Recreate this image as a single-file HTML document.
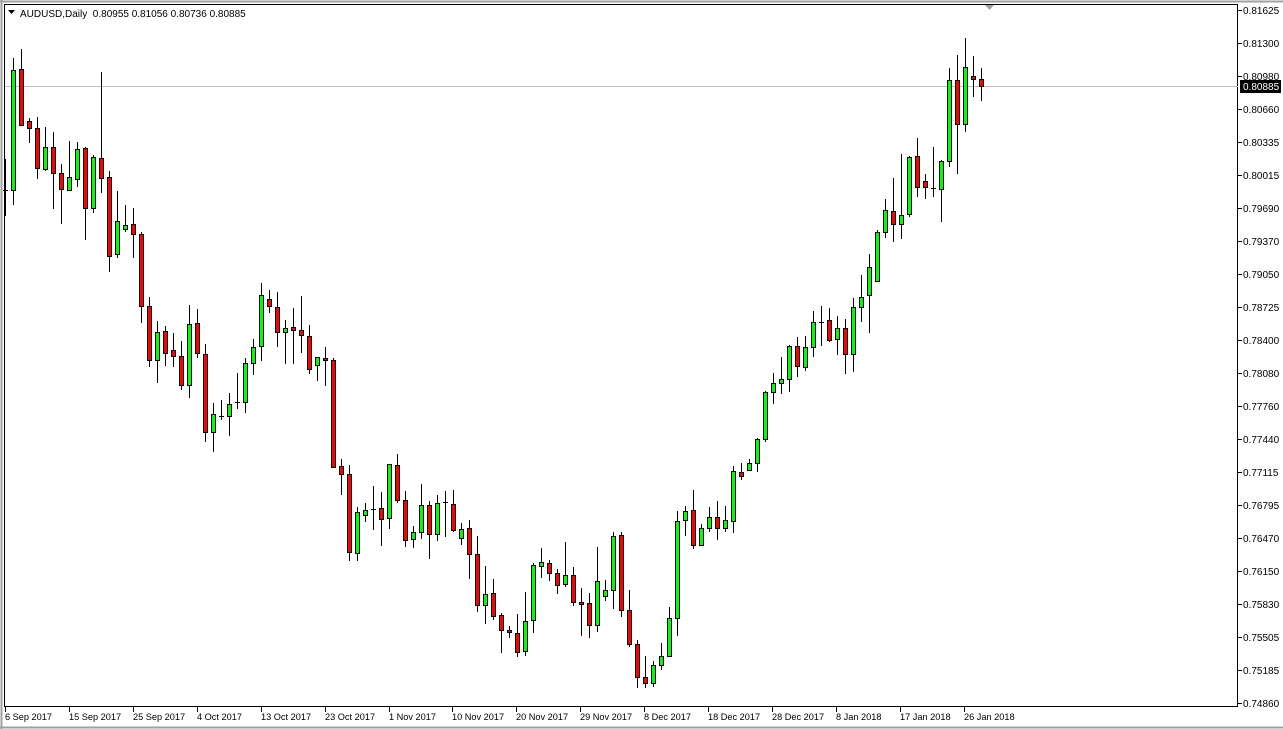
<!DOCTYPE html>
<html><head><meta charset="utf-8"><style>
html,body{margin:0;padding:0;background:#fff;width:1283px;height:729px;overflow:hidden}
svg{display:block}
text{font-family:"Liberation Sans",sans-serif;font-size:10px;fill:#000}
.d text{font-size:9.2px}
</style></head><body>
<svg width="1283" height="729" viewBox="0 0 1283 729" xmlns="http://www.w3.org/2000/svg">
<rect x="0" y="0" width="1283" height="729" fill="#fff"/>
<path d="M0 1.5H1283M1.5 0V729M0 727.5H1283" stroke="#a0a0a0" stroke-width="2" fill="none"/>
<rect x="4.5" y="4.5" width="1233" height="702" fill="none" stroke="#000"/>
<path d="M985 5h9l-4.5 5z" fill="#a0a0a0"/>
<path d="M5 86.5H1238" stroke="#c0c0c0"/>
<path d="M8 10h7l-3.5 4z" fill="#000"/>
<text x="20" y="17">AUDUSD,Daily&#160; 0.80955 0.81056 0.80736 0.80885</text>
<g stroke="#000" fill="none">
<path d="M5.5 159V216M13.5 58V205M21.5 49V125M29.5 118V143M37.5 117V179M45.5 127V171M53.5 132V209M61.5 164V224M69.5 141V191M77.5 142V187M85.5 147V240M93.5 155V213M101.5 72V193M109.5 171V272M117.5 191V258M125.5 205V232M133.5 208V258M141.5 232V323M149.5 297V367M157.5 321V383M165.5 326V366M173.5 333V367M181.5 341V390M189.5 305V398M197.5 309V358M205.5 344V442M213.5 403V452M221.5 400V420M229.5 393V436M237.5 373V409M245.5 358V413M253.5 339V375M261.5 283V361M269.5 290V313M277.5 292V347M285.5 320V364M293.5 308V364M301.5 296V353M309.5 325V374M317.5 357V381M325.5 347V386M333.5 358V467M341.5 459V495M349.5 465V561M357.5 507V561M365.5 503V522M373.5 486V530M381.5 492V546M389.5 464V529M397.5 454V503M405.5 491V547M413.5 526V548M421.5 484V539M429.5 501V559M437.5 495V541M445.5 491V537M453.5 490V532M461.5 523V545M469.5 520V579M477.5 536V612M485.5 566V624M493.5 579V620M501.5 613V653M509.5 626V638M517.5 614V657M525.5 592V656M533.5 563V633M541.5 548V578M549.5 560V581M557.5 569V594M565.5 542V587M573.5 567V606M581.5 588V636M589.5 593V638M597.5 547V632M605.5 580V601M613.5 532V609M621.5 532V617M629.5 590V647M637.5 640V688M645.5 656V688M653.5 661V687M661.5 643V670M669.5 607V657M677.5 511V636M685.5 506V536M693.5 490V549M701.5 524V546M709.5 507V532M717.5 501V540M725.5 506V532M733.5 466V533M741.5 463V480M749.5 459V471M757.5 438V472M765.5 391V442M773.5 373V404M781.5 357V394M789.5 345V392M797.5 337V377M805.5 336V371M813.5 311V357M821.5 306V346M829.5 308V342M837.5 316V355M845.5 319V374M853.5 298V372M861.5 275V322M869.5 254V333M877.5 230V282M885.5 199V238M893.5 178V242M901.5 154V239M909.5 156V217M917.5 138V197M925.5 174V199M933.5 147V197M941.5 160V222M949.5 68V167M957.5 55V174M965.5 38V132M973.5 56V97M981.5 68V101"/>
<path d="M3 190.5h5M219 416.5h5M235 402.5h5M371 509.5h5M443 502.5h5M819 322.5h5M931 188.5h5" stroke-width="1"/>
</g>
<g stroke="#000" fill="#00ff00">
<rect x="11.5" y="70.5" width="4" height="120"/>
<rect x="43.5" y="147.5" width="4" height="22"/>
<rect x="67.5" y="177.5" width="4" height="13"/>
<rect x="75.5" y="149.5" width="4" height="30"/>
<rect x="91.5" y="157.5" width="4" height="51"/>
<rect x="115.5" y="221.5" width="4" height="33"/>
<rect x="123.5" y="225.5" width="4" height="4"/>
<rect x="155.5" y="332.5" width="4" height="28"/>
<rect x="187.5" y="324.5" width="4" height="61"/>
<rect x="211.5" y="414.5" width="4" height="18"/>
<rect x="227.5" y="404.5" width="4" height="12"/>
<rect x="243.5" y="363.5" width="4" height="39"/>
<rect x="251.5" y="347.5" width="4" height="16"/>
<rect x="259.5" y="295.5" width="4" height="51"/>
<rect x="283.5" y="328.5" width="4" height="4"/>
<rect x="315.5" y="357.5" width="4" height="8"/>
<rect x="355.5" y="512.5" width="4" height="41"/>
<rect x="363.5" y="510.5" width="4" height="5"/>
<rect x="387.5" y="464.5" width="4" height="54"/>
<rect x="411.5" y="532.5" width="4" height="7"/>
<rect x="419.5" y="505.5" width="4" height="27"/>
<rect x="435.5" y="503.5" width="4" height="31"/>
<rect x="459.5" y="529.5" width="4" height="9"/>
<rect x="483.5" y="594.5" width="4" height="11"/>
<rect x="523.5" y="621.5" width="4" height="30"/>
<rect x="531.5" y="565.5" width="4" height="55"/>
<rect x="539.5" y="562.5" width="4" height="4"/>
<rect x="563.5" y="575.5" width="4" height="9"/>
<rect x="595.5" y="581.5" width="4" height="44"/>
<rect x="603.5" y="590.5" width="4" height="6"/>
<rect x="611.5" y="536.5" width="4" height="54"/>
<rect x="651.5" y="665.5" width="4" height="18"/>
<rect x="659.5" y="656.5" width="4" height="9"/>
<rect x="667.5" y="618.5" width="4" height="38"/>
<rect x="675.5" y="521.5" width="4" height="97"/>
<rect x="683.5" y="511.5" width="4" height="9"/>
<rect x="699.5" y="528.5" width="4" height="17"/>
<rect x="707.5" y="517.5" width="4" height="11"/>
<rect x="723.5" y="520.5" width="4" height="8"/>
<rect x="731.5" y="471.5" width="4" height="50"/>
<rect x="747.5" y="463.5" width="4" height="7"/>
<rect x="755.5" y="439.5" width="4" height="24"/>
<rect x="763.5" y="392.5" width="4" height="47"/>
<rect x="771.5" y="383.5" width="4" height="9"/>
<rect x="779.5" y="379.5" width="4" height="4"/>
<rect x="787.5" y="346.5" width="4" height="33"/>
<rect x="803.5" y="347.5" width="4" height="20"/>
<rect x="811.5" y="322.5" width="4" height="25"/>
<rect x="835.5" y="328.5" width="4" height="11"/>
<rect x="851.5" y="307.5" width="4" height="47"/>
<rect x="859.5" y="297.5" width="4" height="10"/>
<rect x="867.5" y="267.5" width="4" height="28"/>
<rect x="875.5" y="232.5" width="4" height="49"/>
<rect x="883.5" y="210.5" width="4" height="22"/>
<rect x="899.5" y="215.5" width="4" height="9"/>
<rect x="907.5" y="157.5" width="4" height="57"/>
<rect x="939.5" y="161.5" width="4" height="28"/>
<rect x="947.5" y="80.5" width="4" height="81"/>
<rect x="963.5" y="67.5" width="4" height="57"/>
</g>
<g stroke="#000" fill="#ff0000">
<rect x="19.5" y="69.5" width="4" height="56"/>
<rect x="27.5" y="121.5" width="4" height="7"/>
<rect x="35.5" y="128.5" width="4" height="40"/>
<rect x="51.5" y="147.5" width="4" height="26"/>
<rect x="59.5" y="173.5" width="4" height="16"/>
<rect x="83.5" y="148.5" width="4" height="60"/>
<rect x="99.5" y="158.5" width="4" height="20"/>
<rect x="107.5" y="177.5" width="4" height="79"/>
<rect x="131.5" y="224.5" width="4" height="10"/>
<rect x="139.5" y="234.5" width="4" height="72"/>
<rect x="147.5" y="306.5" width="4" height="54"/>
<rect x="163.5" y="331.5" width="4" height="22"/>
<rect x="171.5" y="350.5" width="4" height="6"/>
<rect x="179.5" y="356.5" width="4" height="29"/>
<rect x="195.5" y="323.5" width="4" height="30"/>
<rect x="203.5" y="354.5" width="4" height="78"/>
<rect x="267.5" y="299.5" width="4" height="7"/>
<rect x="275.5" y="307.5" width="4" height="25"/>
<rect x="291.5" y="327.5" width="4" height="3"/>
<rect x="299.5" y="330.5" width="4" height="5"/>
<rect x="307.5" y="336.5" width="4" height="33"/>
<rect x="323.5" y="358.5" width="4" height="2"/>
<rect x="331.5" y="360.5" width="4" height="107"/>
<rect x="339.5" y="466.5" width="4" height="8"/>
<rect x="347.5" y="474.5" width="4" height="78"/>
<rect x="379.5" y="508.5" width="4" height="11"/>
<rect x="395.5" y="465.5" width="4" height="35"/>
<rect x="403.5" y="500.5" width="4" height="40"/>
<rect x="427.5" y="505.5" width="4" height="29"/>
<rect x="451.5" y="504.5" width="4" height="26"/>
<rect x="467.5" y="528.5" width="4" height="26"/>
<rect x="475.5" y="554.5" width="4" height="51"/>
<rect x="491.5" y="593.5" width="4" height="23"/>
<rect x="499.5" y="615.5" width="4" height="15"/>
<rect x="507.5" y="630.5" width="4" height="2"/>
<rect x="515.5" y="633.5" width="4" height="19"/>
<rect x="547.5" y="563.5" width="4" height="10"/>
<rect x="555.5" y="573.5" width="4" height="12"/>
<rect x="571.5" y="575.5" width="4" height="27"/>
<rect x="579.5" y="602.5" width="4" height="2"/>
<rect x="587.5" y="603.5" width="4" height="22"/>
<rect x="619.5" y="535.5" width="4" height="75"/>
<rect x="627.5" y="610.5" width="4" height="34"/>
<rect x="635.5" y="644.5" width="4" height="33"/>
<rect x="643.5" y="677.5" width="4" height="6"/>
<rect x="691.5" y="510.5" width="4" height="35"/>
<rect x="715.5" y="517.5" width="4" height="11"/>
<rect x="739.5" y="472.5" width="4" height="4"/>
<rect x="795.5" y="346.5" width="4" height="20"/>
<rect x="827.5" y="320.5" width="4" height="20"/>
<rect x="843.5" y="328.5" width="4" height="26"/>
<rect x="891.5" y="211.5" width="4" height="13"/>
<rect x="915.5" y="156.5" width="4" height="31"/>
<rect x="923.5" y="181.5" width="4" height="6"/>
<rect x="955.5" y="80.5" width="4" height="44"/>
<rect x="971.5" y="76.5" width="4" height="3"/>
<rect x="979.5" y="79.5" width="4" height="7"/>
</g>
<path d="M1238 10.5h4M1238 43.5h4M1238 76.5h4M1238 109.5h4M1238 142.5h4M1238 175.5h4M1238 208.5h4M1238 241.5h4M1238 274.5h4M1238 307.5h4M1238 340.5h4M1238 373.5h4M1238 406.5h4M1238 439.5h4M1238 472.5h4M1238 505.5h4M1238 538.5h4M1238 571.5h4M1238 604.5h4M1238 637.5h4M1238 670.5h4M1238 703.5h4" stroke="#000"/>
<g>
<text x="1243" y="14">0.81625</text>
<text x="1243" y="47">0.81300</text>
<text x="1243" y="80">0.80980</text>
<text x="1243" y="113">0.80660</text>
<text x="1243" y="146">0.80335</text>
<text x="1243" y="179">0.80015</text>
<text x="1243" y="212">0.79690</text>
<text x="1243" y="245">0.79370</text>
<text x="1243" y="278">0.79050</text>
<text x="1243" y="311">0.78725</text>
<text x="1243" y="344">0.78400</text>
<text x="1243" y="377">0.78080</text>
<text x="1243" y="410">0.77760</text>
<text x="1243" y="443">0.77440</text>
<text x="1243" y="476">0.77115</text>
<text x="1243" y="509">0.76795</text>
<text x="1243" y="542">0.76470</text>
<text x="1243" y="575">0.76150</text>
<text x="1243" y="608">0.75830</text>
<text x="1243" y="641">0.75505</text>
<text x="1243" y="674">0.75185</text>
<text x="1243" y="707">0.74860</text>
</g>
<rect x="1240" y="80" width="41" height="13" fill="#000"/>
<text x="1243" y="90" style="fill:#fff">0.80885</text>
<path d="M5.5 707v5M69.5 707v5M133.5 707v5M197.5 707v5M261.5 707v5M325.5 707v5M389.5 707v5M452.5 707v5M516.5 707v5M580.5 707v5M644.5 707v5M708.5 707v5M772.5 707v5M836.5 707v5M900.5 707v5M964.5 707v5" stroke="#000"/>
<g class="d">
<text x="5" y="720">6 Sep 2017</text>
<text x="69" y="720">15 Sep 2017</text>
<text x="133" y="720">25 Sep 2017</text>
<text x="197" y="720">4 Oct 2017</text>
<text x="261" y="720">13 Oct 2017</text>
<text x="325" y="720">23 Oct 2017</text>
<text x="389" y="720">1 Nov 2017</text>
<text x="452" y="720">10 Nov 2017</text>
<text x="516" y="720">20 Nov 2017</text>
<text x="580" y="720">29 Nov 2017</text>
<text x="644" y="720">8 Dec 2017</text>
<text x="708" y="720">18 Dec 2017</text>
<text x="772" y="720">28 Dec 2017</text>
<text x="836" y="720">8 Jan 2018</text>
<text x="900" y="720">17 Jan 2018</text>
<text x="964" y="720">26 Jan 2018</text>
</g>
</svg>
</body></html>
